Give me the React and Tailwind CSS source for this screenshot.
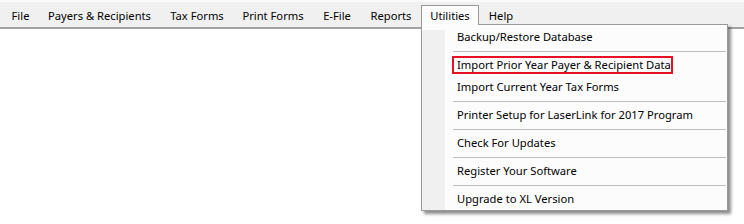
import React from 'react';

const menus = [
  { label: 'File', w: 'w-[35px]' },
  { label: 'Payers & Recipients', w: 'w-[123px]' },
  { label: 'Tax Forms', w: 'w-[72px]' },
  { label: 'Print Forms', w: 'w-[80px]' },
  { label: 'E-File', w: 'w-[48px]' },
  { label: 'Reports', w: 'w-[60px]' },
  { label: 'Utilities', w: 'w-[58px]', open: true },
  { label: 'Help', w: 'w-[44px]' },
];

// null = separator
const utilities = [
  'Backup/Restore Database',
  null,
  { label: 'Import Prior Year Payer & Recipient Data', boxed: true },
  'Import Current Year Tax Forms',
  null,
  'Printer Setup for LaserLink for 2017 Program',
  null,
  'Check For Updates',
  null,
  'Register Your Software',
  null,
  'Upgrade to XL Version',
];

const Dropdown = () => (
  <div className="absolute left-[-1px] top-[18px] w-[307px] bg-[#fcfcfc] border border-[#999999] shadow-[3px_3px_3px_rgba(0,0,0,0.45)] z-10">
    <div className="flex">
      <div className="w-[23px] bg-[#f0f0f0] shrink-0" />
      <div className="flex-1 pt-[1px]">
        {utilities.map((it, i) => {
          if (it === null) {
            return (
              <div key={i} className="h-[6px] flex items-center pl-[8px] pr-[1px]">
                <div className="h-px w-full bg-[#bdbdbd]" />
              </div>
            );
          }
          const label = typeof it === 'string' ? it : it.label;
          const boxed = typeof it !== 'string' && it.boxed;
          return (
            <div key={i} className="h-[22px] flex items-center pl-[7px] whitespace-nowrap">
              {boxed ? (
                <span className="h-[18px] w-[221px] border-2 border-[#e81123] pl-[3px] leading-[14px] flex items-center">
                  {label}
                </span>
              ) : (
                <span className="pl-[5px]">{label}</span>
              )}
            </div>
          );
        })}
      </div>
    </div>
  </div>
);

export default function App() {
  return (
    <div className="w-[744px] h-[224px] bg-white text-black text-[11.2px] font-['Noto_Sans',sans-serif] overflow-hidden">
      {/* Menu bar */}
      <div className="h-[29px] bg-[#f0f0f0] border-t-2 border-t-[#fafafa] border-b-2 border-b-[#a3a3a3] flex pl-[3px]">
        {menus.map((m) => (
          <div
            key={m.label}
            className={`${m.w} h-[22px] mt-[3px] flex items-center justify-center whitespace-nowrap ${
              m.open ? 'relative bg-[#fcfcfc] border border-b-0 border-[#999999] z-20' : ''
            }`}
          >
            <span className={m.open ? 'relative z-30' : ''}>{m.label}</span>
            {m.open && (
              <>
                <div className="absolute left-0 right-0 top-[16px] h-[8px] bg-[#fcfcfc] z-30" />
                <Dropdown />
              </>
            )}
          </div>
        ))}
      </div>
    </div>
  );
}
